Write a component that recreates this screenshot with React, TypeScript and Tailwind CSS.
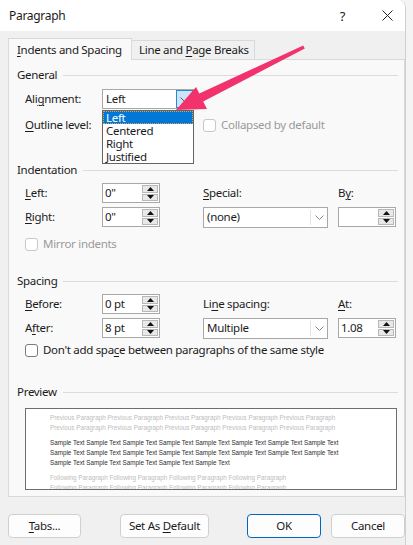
import React from "react";

const U = ({ children }: { children: React.ReactNode }) => (
  <span className="underline decoration-1 underline-offset-[2px]">{children}</span>
);

function Spinner({ value }: { value: string }) {
  return (
    <div className="flex h-[20px] w-[58px] border border-[#a8a8a8] bg-white">
      <div className="flex flex-1 items-center pl-[2px]">{value}</div>
      <div className="flex w-[17px] flex-col gap-px py-px pr-px">
        <div className="flex flex-1 items-center justify-center border border-[#b8b8b8] bg-[#e8e8e8]">
          <svg width="7" height="4" viewBox="0 0 7 4">
            <path d="M0 4 L3.5 0 L7 4Z" fill="#111" />
          </svg>
        </div>
        <div className="flex flex-1 items-center justify-center border border-[#b8b8b8] bg-[#e8e8e8]">
          <svg width="7" height="4" viewBox="0 0 7 4">
            <path d="M0 0 L3.5 4 L7 0Z" fill="#111" />
          </svg>
        </div>
      </div>
    </div>
  );
}

function Chevron({ color = "#8a8a8a" }: { color?: string }) {
  return (
    <svg width="9" height="5" viewBox="0 0 9 5">
      <path d="M0.5 0.5 L4.5 4.5 L8.5 0.5" fill="none" stroke={color} strokeWidth="1" />
    </svg>
  );
}

function Select({ value }: { value: string }) {
  return (
    <div className="flex h-[21px] w-[125px] border border-[#a8a8a8] bg-white">
      <div className="flex flex-1 items-center pl-[3px]">{value}</div>
      <div className="my-[2px] flex w-[17px] items-center justify-center border-l border-[#e2e2e2]">
        <Chevron />
      </div>
    </div>
  );
}

function Check({ label, disabled }: { label: React.ReactNode; disabled?: boolean }) {
  return (
    <div className={"flex items-center gap-[5px] " + (disabled ? "text-[#9a9a9a]" : "")}>
      <div
        className={
          "h-[13px] w-[13px] rounded-[3px] border bg-white " +
          (disabled ? "border-[#c8c8c8]" : "border-[#7a7a7a]")
        }
      />
      <span>{label}</span>
    </div>
  );
}

function Header({ title }: { title: string }) {
  return (
    <div className="flex h-[14px] items-center pl-2 pr-[6px]">
      <span>{title}</span>
      <div className="ml-[6px] h-px flex-1 bg-[#dcdcdc]" />
    </div>
  );
}

function Btn({ children, w, primary }: { children: React.ReactNode; w: string; primary?: boolean }) {
  return (
    <div
      className={
        "flex h-[24px] items-center justify-center rounded-[4px] border bg-[#fdfdfd] " +
        w +
        (primary ? " border-[#0067c0]" : " border-[#d0d0d0]")
      }
    >
      {children}
    </div>
  );
}

const prev = "Previous Paragraph ".repeat(5).trim();
const sample8 = "Sample Text ".repeat(8).trim();
const sample5 = "Sample Text ".repeat(5).trim();
const follow = "Following Paragraph ".repeat(4).trim();

export default function App() {
  return (
    <div className="relative flex h-[545px] w-[413px] overflow-hidden bg-[#f4f4f4] font-['Noto_Sans',sans-serif] text-[11.5px] leading-[14px] tracking-[-0.3px] text-[#1b1b1b]">
      <div className="flex h-full w-[406px] flex-col overflow-hidden rounded-tr-[8px] border-r border-[#cfcfcf] bg-[#f0f0f0]">
        {/* title bar */}
        <div className="flex h-[31px] shrink-0 items-center bg-white pl-[9px]">
          <span className="flex-1 text-[12px]">Paragraph</span>
          <span className="mr-[37px] text-[13px]">?</span>
          <svg className="mr-[12px]" width="11" height="11" viewBox="0 0 11 11">
            <path d="M0.5 0.5 L10.5 10.5 M10.5 0.5 L0.5 10.5" stroke="#222" strokeWidth="1" />
          </svg>
        </div>

        {/* tabs */}
        <div className="mt-[7px] flex items-end pl-[8px]">
          <div className="relative z-10 -mb-px flex h-[22px] w-[124px] items-center border border-b-0 border-[#d9d9d9] bg-[#f9f9f9] pl-[8px]">
            <span>
              <U>I</U>ndents and Spacing
            </span>
          </div>
          <div className="flex h-[19px] w-[123px] items-center border border-b-0 border-l-0 border-[#d9d9d9] bg-[#f0f0f0] pl-[7px]">
            <span>
              Line and <U>P</U>age Breaks
            </span>
          </div>
        </div>

        {/* panel */}
        <div className="mx-[8px] flex h-[438px] w-[397px] shrink-0 flex-col border border-[#d9d9d9] bg-[#f9f9f9] pt-[8px]">
          <Header title="General" />
          <div className="mt-[7px] flex h-[20px] items-center pl-[16px]">
            <span className="w-[77px]">
              Ali<U>g</U>nment:
            </span>
            <div className="relative">
              <div className="flex h-[20px] w-[92px] border border-[#a8a8a8] bg-white">
                <div className="flex flex-1 items-center pl-[3px]">Left</div>
                <div className="flex w-[17px] items-center justify-center border border-[#2b88d8] bg-[#cce4f7]">
                  <Chevron color="#555" />
                </div>
              </div>
              <div className="absolute left-0 top-[21px] z-20 w-[92px] border border-[#646464] bg-white leading-[12px]">
                <div className="flex h-[13px] items-center border border-dotted border-[#e8a13a] bg-[#0078d7] pl-[2px] text-white">
                  Left
                </div>
                <div className="flex h-[13px] items-center pl-[3px]">Centered</div>
                <div className="flex h-[13px] items-center pl-[3px]">Right</div>
                <div className="flex h-[13px] items-center pl-[3px]">Justified</div>
              </div>
            </div>
          </div>
          <div className="mt-[6px] flex h-[20px] items-center pl-[16px]">
            <div className="flex w-[178px]">
              <span>
                <U>O</U>utline level:
              </span>
            </div>
            <Check label="Collapsed by default" disabled />
          </div>

          <div className="mt-[28px]">
            <Header title="Indentation" />
          </div>
          <div className="mt-[6px] flex h-[20px] items-center pl-[16px]">
            <span className="w-[77px]">
              <U>L</U>eft:
            </span>
            <Spinner value={'0"'} />
            <span className="ml-[43px] w-[135px]">
              <U>S</U>pecial:
            </span>
            <span>
              B<U>y</U>:
            </span>
          </div>
          <div className="mt-[4px] flex h-[20px] items-center pl-[16px]">
            <span className="w-[77px]">
              <U>R</U>ight:
            </span>
            <Spinner value={'0"'} />
            <div className="ml-[43px] mr-[10px]">
              <Select value="(none)" />
            </div>
            <Spinner value="" />
          </div>
          <div className="mt-[10px] flex h-[14px] items-center pl-[16px]">
            <Check label="Mirror indents" disabled />
          </div>

          <div className="mt-[23px]">
            <Header title="Spacing" />
          </div>
          <div className="mt-[6px] flex h-[20px] items-center pl-[16px]">
            <span className="w-[77px]">
              <U>B</U>efore:
            </span>
            <Spinner value="0 pt" />
            <span className="ml-[43px] w-[135px]">
              Li<U>n</U>e spacing:
            </span>
            <span>
              <U>A</U>t:
            </span>
          </div>
          <div className="mt-[4px] flex h-[20px] items-center pl-[16px]">
            <span className="w-[77px]">
              A<U>f</U>ter:
            </span>
            <Spinner value="8 pt" />
            <div className="ml-[43px] mr-[10px]">
              <Select value="Multiple" />
            </div>
            <Spinner value="1.08" />
          </div>
          <div className="mt-[5px] flex h-[14px] items-center pl-[16px]">
            <Check
              label={
                <>
                  Don't add spa<U>c</U>e between paragraphs of the same style
                </>
              }
            />
          </div>

          <div className="mt-[28px]">
            <Header title="Preview" />
          </div>
          <div className="ml-[16px] mt-[9px] h-[82px] w-[372px] overflow-hidden border border-[#6e6e6e] bg-white pl-[24px] pt-[4px] font-['Liberation_Sans',sans-serif] text-[6.3px] leading-[10px] tracking-normal">
            <div className="whitespace-nowrap text-[#bdbdbd]">{prev}</div>
            <div className="whitespace-nowrap text-[#bdbdbd]">{prev}</div>
            <div className="mt-[5px] whitespace-nowrap text-[#2e2e2e]">{sample8}</div>
            <div className="whitespace-nowrap text-[#2e2e2e]">{sample8}</div>
            <div className="whitespace-nowrap text-[#2e2e2e]">{sample5}</div>
            <div className="mt-[5px] whitespace-nowrap text-[#bdbdbd]">{follow}</div>
            <div className="whitespace-nowrap text-[#bdbdbd]">{follow}</div>
          </div>
        </div>

        {/* buttons */}
        <div className="mt-[17px] flex pl-[8px]">
          <Btn w="w-[73px]">
            <span>
              <U>T</U>abs...
            </span>
          </Btn>
          <div className="ml-[39px]">
            <Btn w="w-[89px]">
              <span>
                Set As <U>D</U>efault
              </span>
            </Btn>
          </div>
          <div className="ml-[38px]">
            <Btn w="w-[74px]" primary>
              OK
            </Btn>
          </div>
          <div className="ml-[10px]">
            <Btn w="w-[74px]">Cancel</Btn>
          </div>
        </div>
      </div>

      {/* callout arrow */}
      <svg className="pointer-events-none absolute left-0 top-0 z-30" width="413" height="545" viewBox="0 0 413 545">
        <polygon
          points="176,110 196,87 199.3,93.5 303.2,45.5 304.8,48.5 203.2,101.5 207,109"
          fill="#f2326d"
        />
      </svg>
    </div>
  );
}
